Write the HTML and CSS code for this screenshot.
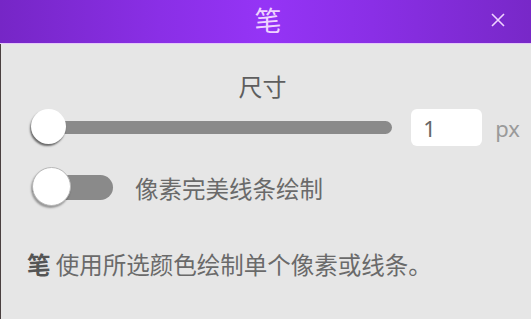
FILE: index.html
```html
<!DOCTYPE html>
<html>
<head>
    <title>笔</title>
    <link rel="stylesheet" href="styles.css">
</head>
<body>
    <div class="dialog">
        <div class="titlebar">
            <span class="title">笔</span>
            <button class="close" aria-label="关闭">
                <svg width="16" height="16" viewBox="0 0 16 16">
                    <path d="M2 2 L14 14 M14 2 L2 14" stroke="#efd2ff" stroke-width="1.6" fill="none"/>
                </svg>
            </button>
        </div>
        <div class="content">
            <div class="field-label">尺寸</div>
            <div class="size-row">
                <div class="slider">
                    <div class="track"></div>
                    <div class="thumb"></div>
                </div>
                <input type="text" class="size-input" value="1">
                <span class="unit">px</span>
            </div>
            <label class="toggle-row">
                <span class="switch"><span class="knob"></span></span>
                <span class="toggle-text">像素完美线条绘制</span>
            </label>
            <p class="desc"><b>笔</b> 使用所选颜色绘制单个像素或线条。</p>
        </div>
    </div>
</body>
</html>
```

FILE: styles.css
```css
body {
    margin: 0;
    font-family: "Noto Sans CJK SC", "Noto Sans", sans-serif;
    background-color: #4a4040;
    height: 319px;
    overflow: hidden;
}
.dialog {
    display: flex;
    flex-direction: column;
    height: 100%;
}
.titlebar {
    height: 43px;
    flex: none;
    display: flex;
    justify-content: center;
    align-items: center;
    position: relative;
    background: linear-gradient(90deg, #7626c6 0%, #8a2fe6 30%, #9534f6 50%, #8a2fe6 70%, #7828c8 100%);
    border-bottom: 1px solid #e4c8f8;
}
.title {
    color: #efd2ff;
    font-size: 27px;
    line-height: 27px;
    margin-left: 5px;
    margin-top: -4px;
}
.close {
    position: absolute;
    right: 25px;
    top: 12px;
    background: none;
    border: none;
    padding: 0;
    width: 16px;
    height: 16px;
    cursor: pointer;
}
.content {
    flex: 1;
    margin-left: 1px;
    background-color: #e6e6e6;
    padding: 30px 11px 0 30px;
    color: #666;
}
.field-label {
    text-align: center;
    font-size: 24px;
    line-height: 24px;
    color: #5e5e5e;
    padding-right: 26px;
}
.size-row {
    display: flex;
    align-items: center;
    margin-top: 11px;
    height: 37px;
}
.slider {
    flex: 1;
    position: relative;
    height: 37px;
}
.track {
    position: absolute;
    left: 8px;
    right: 0;
    top: 12px;
    height: 13px;
    border-radius: 7px;
    background-color: #8a8a8a;
}
.thumb {
    position: absolute;
    left: 0;
    top: 0;
    width: 35px;
    height: 35px;
    border-radius: 50%;
    background-color: #fff;
    box-shadow: -1px 2px 2px rgba(0, 0, 0, 0.55);
}
.size-input {
    width: 71px;
    height: 37px;
    box-sizing: border-box;
    margin-left: 19px;
    border: none;
    border-radius: 6px;
    background-color: #fff;
    padding: 0 12px;
    font-family: "Noto Sans", sans-serif;
    font-size: 22px;
    color: #666;
    outline: none;
}
.unit {
    margin-left: 13px;
    font-family: "Noto Sans", sans-serif;
    font-size: 22px;
    color: #9a9a9a;
    line-height: 37px;
    margin-top: 2px;
}
.toggle-row {
    display: flex;
    align-items: center;
    margin-top: 21px;
    height: 41px;
}
.switch {
    position: relative;
    width: 81px;
    height: 25px;
    border-radius: 13px;
    background-color: #8a8a8a;
    margin-left: 1px;
}
.knob {
    position: absolute;
    left: 0;
    top: -8px;
    width: 39px;
    height: 39px;
    box-sizing: border-box;
    border-radius: 50%;
    background-color: #fff;
    border: 1px solid #b8b8b8;
    box-shadow: -1px 2px 2px rgba(0, 0, 0, 0.35);
}
.toggle-text {
    margin-left: 22px;
    font-size: 23.5px;
    line-height: 24px;
    color: #6a6a6a;
}
.desc {
    margin: 44px 0 0 -4px;
    font-size: 23.5px;
    line-height: 24px;
    color: #6a6a6a;
}
.desc b {
    color: #555;
}
```
